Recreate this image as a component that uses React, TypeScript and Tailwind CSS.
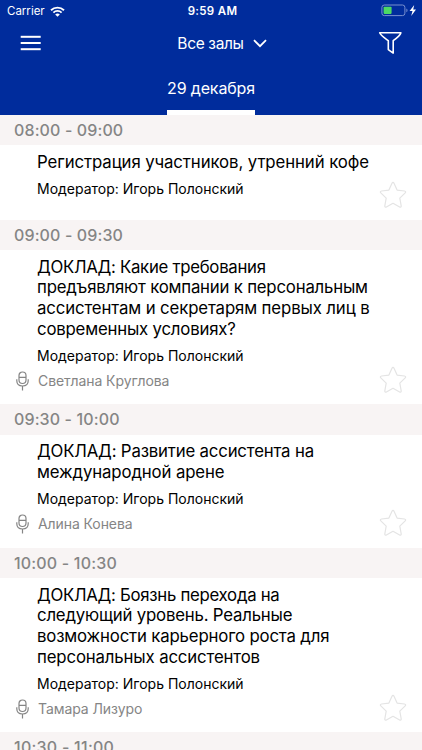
import React from 'react';

type Line = { text: string; tracking: string };

type Session = {
  time: string;
  timeTracking: string;
  lines: Line[];
  speaker?: string;
  height: string;
};

const sessions: Session[] = [
  {
    time: '08:00 - 09:00',
    timeTracking: 'tracking-[0.12px]',
    lines: [{ text: 'Регистрация участников, утренний кофе', tracking: 'tracking-[-0.1px]' }],
    height: 'h-[74.5px]',
  },
  {
    time: '09:00 - 09:30',
    timeTracking: 'tracking-[0.12px]',
    lines: [
      { text: 'ДОКЛАД: Какие требования', tracking: 'tracking-[-0.29px]' },
      { text: 'предъявляют компании к персональным', tracking: 'tracking-[-0.21px]' },
      { text: 'ассистентам и секретарям первых лиц в', tracking: 'tracking-[-0.13px]' },
      { text: 'современных условиях?', tracking: 'tracking-[-0.2px]' },
    ],
    speaker: 'Светлана Круглова',
    height: 'h-[154px]',
  },
  {
    time: '09:30 - 10:00',
    timeTracking: 'tracking-[0.12px]',
    lines: [
      { text: 'ДОКЛАД: Развитие ассистента на', tracking: 'tracking-[-0.18px]' },
      { text: 'международной арене', tracking: 'tracking-[-0.13px]' },
    ],
    speaker: 'Алина Конева',
    height: 'h-[113px]',
  },
  {
    time: '10:00 - 10:30',
    timeTracking: 'tracking-[0.18px]',
    lines: [
      { text: 'ДОКЛАД: Боязнь перехода на', tracking: 'tracking-[-0.29px]' },
      { text: 'следующий уровень. Реальные', tracking: 'tracking-[-0.2px]' },
      { text: 'возможности карьерного роста для', tracking: 'tracking-[-0.17px]' },
      { text: 'персональных ассистентов', tracking: 'tracking-[-0.15px]' },
    ],
    speaker: 'Тамара Лизуро',
    height: 'h-[154px]',
  },
];

function StatusBar() {
  return (
    <div className="grid h-[22px] grid-cols-3 items-center pl-[7px] pr-[4px] text-[11.5px] leading-[22px]">
      <div className="flex items-center gap-[5px]">
        <span className="text-[11.5px]">Carrier</span>
        <svg width="15" height="11" viewBox="0 0 15 11" fill="none" stroke="white">
          <path d="M1 4.2C4.7.7 10.3.7 14 4.2" strokeWidth="1.9" />
          <path d="M3.4 6.6c2.3-2.2 5.9-2.2 8.2 0" strokeWidth="1.8" />
          <path d="M7.5 10.7 5.2 8.4c1.3-1.2 3.3-1.2 4.6 0z" fill="white" stroke="none" />
        </svg>
      </div>
      <span className="text-center font-semibold tracking-[0.3px]">9:59 AM</span>
      <div className="flex justify-end pb-px">
        <svg width="37" height="13" viewBox="0 0 37 13" fill="none">
          <rect x="0.9" y="1" width="23" height="10.6" rx="2.4" stroke="#7990cf" />
          <rect x="2.6" y="2.7" width="8" height="7.2" rx="0.8" fill="#4cd964" />
          <path d="M25.4 4.5c1.5.5 1.5 3.3 0 3.8z" fill="#7990cf" />
          <path d="M33.2 1 28.600 7h2.900l-1.300 4.900L35 5.500h-2.800z" fill="white" />
        </svg>
      </div>
    </div>
  );
}

function Header() {
  return (
    <header className="flex h-[114.5px] flex-col bg-[#002c9c] text-white">
      <StatusBar />
      <div className="grid h-[43px] grid-cols-[60px_1fr_60px] items-center">
        <svg className="ml-[20px]" width="22" height="17" viewBox="0 0 22 17" fill="white">
          <rect x="0.7" y="0.8" width="20" height="2" />
          <rect x="0.7" y="7" width="20" height="2" />
          <rect x="0.7" y="13.200" width="20" height="2" />
        </svg>
        <div className="flex items-center justify-center gap-[9px] pl-[22px]">
          <span className="text-[15.5px] leading-[20px] tracking-[-0.35px]">Все залы</span>
          <svg width="14" height="9" viewBox="0 0 14 9" fill="none" stroke="white" strokeWidth="1.8">
            <path d="M1 1.2 7 7.2l6-6" />
          </svg>
        </div>
        <svg className="ml-[16px]" width="25" height="25" viewBox="0 0 25 25" fill="none" stroke="white" strokeWidth="1.6" strokeLinejoin="round">
          <path d="M1.7 1.7h21.2c-.6 2.3-3.1 4.6-7.7 8v12.4l-4.9-3.5V9.7C6 6.500 2.500 4.100 1.700 1.700z" />
        </svg>
      </div>
      <div className="flex flex-1 flex-col items-center">
        <div className="flex w-[88px] flex-1 flex-col items-center border-b-[5px] border-white pt-[12px]">
          <span className="whitespace-nowrap text-[16px] leading-[22px] tracking-[-0.15px]">29 декабря</span>
        </div>
      </div>
    </header>
  );
}

function Star() {
  return (
    <svg width="28" height="28" viewBox="0 0 28 28" fill="none" stroke="#e4e4e4" strokeWidth="1.2" strokeLinejoin="round">
      <path d="M13 2.2c.5-1 1.500-1 2 0l3.100 6.900 7.400.9c1.200.2 1.500 1.100.7 1.900l-5.400 5.200 1.400 7.700c.2 1.100-.6 1.700-1.600 1.200L14 22.300 7.400 26c-1 .5-1.800-.1-1.600-1.200l1.400-7.700-5.400-5.200c-.8-.8-.5-1.700.7-1.900l7.400-.9z" />
    </svg>
  );
}

function Mic() {
  return (
    <svg width="13" height="20" viewBox="0 0 13 20" fill="none" stroke="#858585" strokeWidth="1.200">
      <rect x="3" y="1" width="7" height="11.500" rx="3.500" />
      <path d="M3 6.400h7M.8 8.200v1.600c0 3.200 2.200 5.200 5.700 5.200s5.700-2 5.700-5.200V8.200M6.500 15v4.500" />
    </svg>
  );
}

function TimeBand({ time, tracking }: { time: string; tracking: string }) {
  return (
    <div className={`h-[30.5px] bg-[#f8f4f4] pl-[14px] text-[16px] font-medium leading-[31px] text-[#858585] ${tracking}`}>
      {time}
    </div>
  );
}

export default function App() {
  return (
    <div className="h-[750px] w-[422px] overflow-hidden bg-white font-['Inter','Noto_Sans',sans-serif]">
      <Header />
      {sessions.map((s) => (
        <section key={s.time}>
          <TimeBand time={s.time} tracking={s.timeTracking} />
          <div className={`flex justify-between pt-[6.8px] ${s.height}`}>
            <div className="whitespace-nowrap">
              <h2 className="pl-[37px] text-[16.8px] leading-[20.600px] text-black">
                {s.lines.map((line) => (
                  <span key={line.text} className={`block ${line.tracking}`}>{line.text}</span>
                ))}
              </h2>
              <p className="mt-[6.5px] pl-[37px] text-[14px] leading-[20px] text-black">Модератор: Игорь Полонский</p>
              {s.speaker && (
                <div className="mt-[5px] flex h-[20px] items-center gap-[9px] pl-[16px] text-[14px] leading-[20px] text-[#858585]">
                  <Mic />
                  <span className="tracking-[-0.08px]">{s.speaker}</span>
                </div>
              )}
            </div>
            <div className="flex w-[43px] shrink-0 items-end pb-[10.5px]">
              <Star />
            </div>
          </div>
        </section>
      ))}
      <TimeBand time="10:30 - 11:00" tracking="tracking-[0.25px]" />
    </div>
  );
}
